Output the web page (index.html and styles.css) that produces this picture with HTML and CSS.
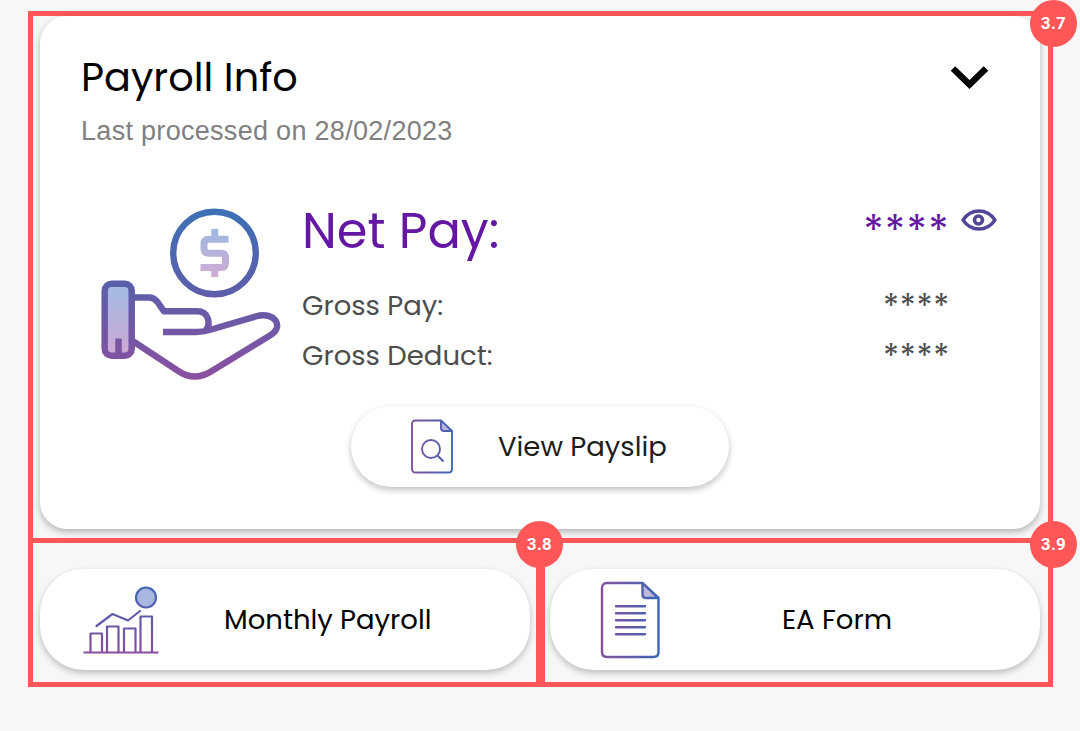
FILE: index.html
```html
<!DOCTYPE html>
<html lang="en">
<head>
<meta charset="utf-8">
<title>Payroll Info</title>
<link rel="stylesheet" href="styles.css">
</head>
<body>
<main class="page">
  <section class="frame frame-main">
    <span class="badge">3.7</span>
    <div class="card">
      <header class="card-head">
        <div>
          <h1 class="title">Payroll Info</h1>
          <p class="subtitle">Last processed on 28/02/2023</p>
        </div>
        <svg class="chevron" width="40" height="26" viewBox="0 0 40 26"><path d="M3 3.500 19.500 19.500 36 3.500" fill="none" stroke="#000" stroke-width="6.500"/></svg>
      </header>
      <div class="summary">
        <svg class="hand" width="200" height="200" viewBox="0 0 200 200" fill="none">
          <defs>
            <linearGradient id="hand-line" gradientUnits="userSpaceOnUse" x1="0" y1="14" x2="0" y2="185"><stop offset="0" stop-color="#3d70b5"/><stop offset=".45" stop-color="#5a5fab"/><stop offset="1" stop-color="#8b4f9f"/></linearGradient>
            <linearGradient id="cuff-fill" x1="0" y1="0" x2="0" y2="1"><stop offset="0" stop-color="#a2bbe3"/><stop offset="1" stop-color="#cda9d4"/></linearGradient>
            <linearGradient id="dollar-line" gradientUnits="userSpaceOnUse" x1="0" y1="34" x2="0" y2="82"><stop offset="0" stop-color="#9db8e2"/><stop offset="1" stop-color="#d0acd3"/></linearGradient>
          </defs>
          <circle cx="124.500" cy="58" r="41.300" stroke="url(#hand-line)" stroke-width="6.400"/>
          <path d="M138.500 44.200H119q-5 0-5 5v4q0 5 5 5h12q4.500 0 4.500 4.500v5q0 4.800-4.500 4.800h-20.500M124.800 34v10M124.800 72v10" stroke="url(#dollar-line)" stroke-width="7"/>
          <rect x="14.700" y="88.700" width="27" height="72" rx="7" fill="url(#cuff-fill)" stroke="url(#hand-line)" stroke-width="6.500"/>
          <path d="M28.500 143.500v17" stroke="url(#hand-line)" stroke-width="6.500"/>
          <path d="M44 102.500h15q5 0 8.500 4.500l6.500 9.300H107c12 0 14.500 13 8 20M73 137h33.500q6 0 13-2L165.500 121.500c20-6 29 11 14.500 19L121 176.500q-16.500 10-32 0L43.500 146.500" stroke="url(#hand-line)" stroke-width="6.400" stroke-linejoin="round"/>
        </svg>
        <dl class="labels">
          <dt class="net">Net Pay:</dt>
          <dt class="gross-pay">Gross Pay:</dt>
          <dt class="gross-deduct">Gross Deduct:</dt>
        </dl>
        <div class="values">
          <span class="stars-net">****</span>
          <span class="stars">****</span>
          <span class="stars">****</span>
        </div>
        <svg class="eye" width="36" height="24" viewBox="0 0 36 24" fill="none" stroke="#554597"><path d="M2 12Q8 3 18 3t16 9Q28 21 18 21T2 12Z" stroke-width="3.400" stroke-linejoin="round"/><circle cx="17.500" cy="12" r="4" stroke-width="3.600"/></svg>
      </div>
      <button class="pill payslip">
        <svg class="slip" width="44" height="56" viewBox="0 0 44 56" fill="none" stroke-width="1.900">
          <defs><linearGradient id="slip-line" gradientUnits="userSpaceOnUse" x1="0" y1="0" x2="44" y2="0"><stop stop-color="#8652a0"/><stop offset=".6" stop-color="#5c5ca9"/><stop offset="1" stop-color="#3868b4"/></linearGradient></defs>
          <path d="M31 1.500V9q0 3 3 3h8Z" fill="#b9b7df"/>
          <path d="M31 1.500H5.500q-3.500 0-3.500 3.500v45q0 3.500 3.500 3.500h33q3.500 0 3.500-3.500V12ZM31 1.500V9q0 3 3 3h8" stroke="url(#slip-line)" stroke-linejoin="round"/>
          <circle cx="21" cy="30" r="9" stroke="url(#slip-line)"/>
          <path d="m27.500 36.500 6 6" stroke="#5961aa" stroke-width="2.200"/>
        </svg>
        <span class="payslip-text">View Payslip</span>
      </button>
    </div>
  </section>
  <div class="row">
    <section class="frame frame-left">
      <span class="badge">3.8</span>
      <button class="pill action">
        <svg class="chart" width="78" height="70" viewBox="0 0 78 70" fill="none" stroke-linejoin="round">
          <defs><linearGradient id="chart-line" gradientUnits="userSpaceOnUse" x1="0" y1="0" x2="0" y2="69"><stop stop-color="#3d68b3"/><stop offset=".5" stop-color="#625baa"/><stop offset="1" stop-color="#8b4d9e"/></linearGradient></defs>
          <g stroke="url(#chart-line)" stroke-width="2.200">
            <circle cx="64" cy="12.500" r="10" fill="#a9b6df"/>
            <path d="M14.500 41 30.500 29 46 35.500 58 26" stroke-linecap="round"/>
            <path d="M8.500 67V48.500H20V67M25 67V41.500H36.500V67M42 67V43.500H53.500V67M58.500 67V31.500H70V67M1.500 67.500h75"/>
          </g>
        </svg>
        <span class="monthly-text">Monthly Payroll</span>
      </button>
    </section>
    <section class="frame frame-right">
      <span class="badge">3.9</span>
      <button class="pill action">
        <svg class="form" width="60" height="78" viewBox="0 0 60 78" fill="none" stroke-width="2.400">
          <defs><linearGradient id="form-line" gradientUnits="userSpaceOnUse" x1="0" y1="0" x2="60" y2="0"><stop stop-color="#8652a0"/><stop offset=".6" stop-color="#5c5ca9"/><stop offset="1" stop-color="#3868b4"/></linearGradient></defs>
          <path d="M42.500 2v11.500q0 3.500 3.500 3.500h12.500Z" fill="#c1b8e0"/>
          <path d="M42.500 2H7Q2 2 2 7v64q0 5 5 5h46.500q5 0 5-5V17ZM42.500 2v11.500q0 3.500 3.500 3.500h12.500" stroke="url(#form-line)" stroke-linejoin="round"/>
          <path d="M16 25.200h29M16 32.200h29M16 39.200h29M16 46.200h29M16 53.200h29" stroke="url(#form-line)" stroke-linecap="round"/>
        </svg>
        <span class="form-text">EA Form</span>
      </button>
    </section>
  </div>
</main>
</body>
</html>
```

FILE: styles.css
```css
* { box-sizing: border-box; }
body {
  margin: 0;
  background: #f7f7f7;
  font-family: Poppins, Inter, sans-serif;
  color: #000;
}
.page { padding: 11px 27px 0 28px; height: 731px; overflow: hidden; }
.frame { position: relative; border: 5px solid #ff5757; }
.frame-main { height: 532px; padding: 0 8px 0 7px; }
.row { display: flex; height: 144px; }
.frame-left, .frame-right { border-top: 0; padding-top: 26px; }
.frame-left { width: 513px; padding-left: 7px; padding-right: 6px; }
.frame-right { width: 513px; margin-left: -1px; padding-left: 5px; padding-right: 8px; }
.badge {
  position: absolute;
  z-index: 2;
  right: -29px;
  width: 47px;
  height: 47px;
  border-radius: 50%;
  background: #ff5757;
  color: #fff;
  font: 700 17px/47px Roboto, sans-serif;
  letter-spacing: .3px;
  text-align: center;
}
.frame-main .badge { top: -16px; }
.frame-left .badge, .frame-right .badge { top: -22px; }
.frame-left .badge { right: -27px; }
.card {
  height: 513px;
  border-radius: 27px;
  background: #fff;
  box-shadow: 0 3px 7px rgba(0, 0, 0, .28);
}
.card-head {
  display: flex;
  justify-content: space-between;
  height: 179px;
  padding: 35px 50px 0 41px;
}
.title { margin: 0; font-weight: 400; font-size: 39.8px; line-height: 52px; white-space: nowrap; }
.subtitle { margin: 12px 0 0; color: #808080; font: 27px/32px "Liberation Sans", sans-serif; letter-spacing: .3px; white-space: nowrap; }
.chevron { margin-top: 14px; }
.summary { display: flex; height: 211px; padding-left: 50px; }
.hand { flex: none; }
.labels { margin: 0 0 0 12px; width: 340px; white-space: nowrap; }
.net { padding-top: 4px; color: #6317a3; font-size: 49.5px; line-height: 64px; }
.gross-pay, .gross-deduct { color: #4d4d4d; font-size: 27.5px; line-height: 50px; }
.gross-pay { padding-top: 18px; }
.values { display: flex; flex-direction: column; align-items: flex-end; width: 308px; color: #4d4d4d; }
.stars-net { height: 87px; padding-top: 12px; color: #6317a3; font-size: 42px; line-height: 50px; letter-spacing: 1.3px; }
.stars { height: 50px; font-size: 33px; line-height: 50px; letter-spacing: .7px; }
.eye { margin: 13px 0 0 11px; }
.pill {
  display: flex;
  align-items: center;
  border: 0;
  padding: 0;
  background: #fff;
  color: #000;
  font: inherit;
  white-space: nowrap;
  box-shadow: 0 3px 6px rgba(0, 0, 0, .24);
}
.payslip { width: 378px; height: 81px; margin: 0 auto; padding-left: 59px; border-radius: 41px; color: #1d1d1d; }
.payslip-text { margin-left: 44px; font-size: 27.5px; }
.action { width: 490px; height: 101px; padding-top: 1px; border-radius: 44px; font-size: 27.5px; }
.chart { margin-left: 42px; }
.monthly-text { margin-left: 64px; }
.form { margin-left: 50px; }
.form-text { margin-left: 122px; }
```
